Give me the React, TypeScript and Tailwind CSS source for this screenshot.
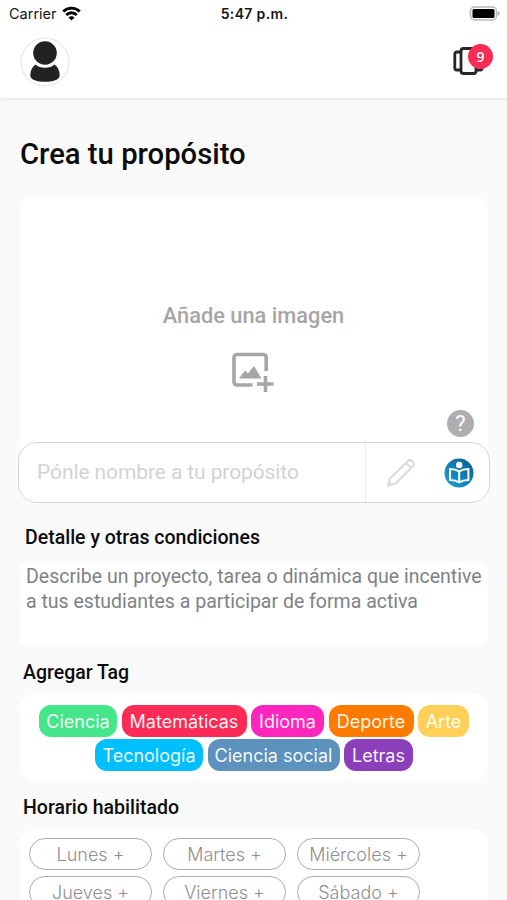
import { clsx } from "clsx";

const TAG_ROWS = [
  [
    { label: "Ciencia", width: "w-[78px]", color: "bg-[#45e68a]" },
    { label: "Matemáticas", width: "w-[125px]", color: "bg-[#fc2b55]" },
    { label: "Idioma", width: "w-[73px]", color: "bg-[#ff26bd]" },
    { label: "Deporte", width: "w-[85px]", color: "bg-[#ff7b00]" },
    { label: "Arte", width: "w-[51px]", color: "bg-[#ffd057]" },
  ],
  [
    { label: "Tecnología", width: "w-[108px]", color: "bg-[#00bfff]" },
    { label: "Ciencia social", width: "w-[132px]", color: "bg-[#5c92bc]" },
    { label: "Letras", width: "w-[69px]", color: "bg-[#8b3fba]" },
  ],
];

const DAYS = ["Lunes", "Martes", "Miércoles", "Jueves", "Viernes", "Sábado"];

function StatusBar() {
  return (
    <div className="grid h-7 grid-cols-3 items-center pl-[9px] pr-[7px] font-['Inter',sans-serif] text-[#161616]">
      <div className="flex items-center gap-[5px]">
        <span className="text-[14.5px]">Carrier</span>
        <svg className="-mt-0.5" width="19" height="15" viewBox="0 0 19 15" fill="none" stroke="#000" strokeWidth="2.8">
          <path d="M1.2 5.5a11.8 11.8 0 0 1 16.6 0" />
          <path d="M4.3 8.9a7.4 7.4 0 0 1 10.4 0" />
          <path d="M9.5 14.5l-3-3a4.2 4.2 0 0 1 6 0z" fill="#000" stroke="none" />
        </svg>
      </div>
      <span className="-mt-0.5 whitespace-nowrap text-center text-[14px] font-semibold tracking-[0.35px]">
        5:47 p.m.
      </span>
      <svg className="-mt-0.5 justify-self-end" width="31" height="15" viewBox="0 0 31 15">
        <rect x="1.5" y="1" width="26" height="13" rx="4" fill="#fff" stroke="#b8b8b8" strokeWidth="1.5" />
        <rect x="3.5" y="3" width="22" height="9" rx="1.5" fill="#000" />
        <path d="M28.8 5.2v4.6c2.4-.8 2.4-3.8 0-4.6z" fill="#a8a8a8" />
      </svg>
    </div>
  );
}

function Header() {
  return (
    <header className="flex h-[70px] items-start justify-between pl-5 pr-[13px] pt-[9px]">
      <svg width="50" height="50" viewBox="0 0 50 50">
        <circle cx="25" cy="25" r="24" fill="#fff" stroke="#e2e2e2" />
        <circle cx="25" cy="16" r="11.8" fill="#222" />
        <path
          d="M15.5 27.4c2.3 2.2 5.7 3.3 9.5 3.3s7.2-1.1 9.5-3.3c3.3 2.2 5.2 6.1 5.2 11.1 0 4.4-7.2 6.3-14.7 6.3s-14.7-1.9-14.7-6.3c0-5 1.9-8.900 5.200-11.100z"
          fill="#222"
        />
      </svg>
      <div className="relative h-10 w-[44px]">
        <svg className="mt-2" width="36" height="32" viewBox="0 0 36 32" fill="none" stroke="#262626" strokeWidth="2.8">
          <rect x="11" y="3.5" width="15" height="25" rx="2.5" />
          <path d="M10.5 7H6.8a2 2 0 0 0-2 2v14a2 2 0 0 0 2 2h3.7" />
          <path d="M26.5 7h3.7a2 2 0 0 1 2 2v14a2 2 0 0 1-2 2h-3.7" />
        </svg>
        <span className="absolute right-px top-[7px] flex size-[25px] items-center justify-center rounded-full bg-[#fc2b55] pb-px font-['Open_Sans',sans-serif] text-[14px] font-semibold text-white">
          9
        </span>
      </div>
    </header>
  );
}

function AddImageIcon() {
  return (
    <svg width="42" height="40" viewBox="0 0 42 40" fill="none" stroke="#a6a6a6" strokeWidth="3.6">
      <path d="M34.2 19V5.5a3 3 0 0 0-3-3H5a3 3 0 0 0-3 3V30a3 3 0 0 0 3 3h15.5" />
      <path d="M33.5 24v16M25 32h16.5" />
      <path d="M7 26.5l6-8 3 3 6-7.5 7.5 12.5z" fill="#a6a6a6" stroke="none" />
    </svg>
  );
}

function PencilIcon() {
  return (
    <svg width="30" height="30" viewBox="0 0 30 30" fill="none" stroke="#dcdcdc" strokeWidth="2.2" strokeLinejoin="round">
      <path d="M2 27.5l2-7L22 3c1.3-1.2 3-1.2 4.2 0l1 1c1.2 1.2 1.2 2.9 0 4.1L9.5 25.5z" />
      <path d="M20 5l5.2 5.2M2 27.5l3.5-1-2.5-2.5z" />
    </svg>
  );
}

function ReaderIcon() {
  return (
    <svg width="30" height="30" viewBox="0 0 30 30">
      <defs>
        <linearGradient id="reader" x1="0" y1="1" x2="1" y2="0">
          <stop offset="0" stopColor="#1aa3dc" />
          <stop offset="1" stopColor="#075b91" />
        </linearGradient>
      </defs>
      <circle cx="15" cy="15" r="14.5" fill="url(#reader)" />
      <circle cx="15.2" cy="7" r="3.2" fill="#fff" />
      <path
        d="M15.2 13.4c-2.7-1.8-5.6-2.5-9.2-2.5v11c3.6 0 6.5.6 9.2 2.4 2.7-1.8 5.6-2.4 9.2-2.4v-11c-3.6 0-6.5.7-9.2 2.5zM15.2 13.4v10.5"
        fill="none"
        stroke="#fff"
        strokeWidth="2"
      />
    </svg>
  );
}

function ImageCard() {
  return (
    <section className="mt-[22px] flex h-[305px] flex-col rounded-xl bg-white">
      <div className="flex flex-col items-center pt-[103px]">
        <p className="ml-[-1px] whitespace-nowrap text-[21.8px] font-medium leading-8 text-[#a6a6a6]">
          Añade una imagen
        </p>
        <div className="ml-[-3px] mt-[20px]">
          <AddImageIcon />
        </div>
      </div>
      <span className="mr-[14px] mt-[18px] flex size-[27px] items-center justify-center self-end rounded-full bg-[#aeaeae] text-[22px] text-white">
        ?
      </span>
      <div className="-mx-0.5 mt-[5px] flex h-[61px] shrink-0 items-center rounded-[19px] border-[1.5px] border-[#d6d6d6] bg-white">
        <span className="w-[346px] whitespace-nowrap pl-[18px] text-[21px] text-[#d3d3d3]">
          <span className="tracking-[-0.1px]">Pónle nombre a tu propósito</span>
        </span>
        <div className="flex h-full flex-1 items-center justify-between border-l border-[#ededed] pl-5 pr-[15px]">
          <PencilIcon />
          <ReaderIcon />
        </div>
      </div>
    </section>
  );
}

export default function App() {
  return (
    <div className="h-[900px] w-[507px] overflow-hidden bg-[#fafafa] font-['Roboto',sans-serif] text-[#0c0c0c]">
      <div className="bg-white shadow-[0_1px_4px_rgba(0,0,0,0.11)]">
        <StatusBar />
        <Header />
      </div>
      <main className="pl-5 pr-[19px]">
        <h1 className="mt-9 whitespace-nowrap text-[29.25px] font-medium leading-[41px]">
          Crea tu propósito
        </h1>
        <ImageCard />
        <h2 className="ml-[5px] mt-[22px] text-[19.5px] font-medium leading-7">
          Detalle y otras condiciones
        </h2>
        <p className="mt-[10px] h-[84px] whitespace-nowrap rounded-lg bg-white pl-1.5 pt-[3px] text-[19.5px] leading-[24.5px] text-[#7d8286]">
          Describe un proyecto, tarea o dinámica que incentive
          <br />a tus estudiantes a participar de forma activa
        </p>
        <h2 className="ml-[3px] mt-[13px] text-[19.5px] font-medium leading-7">Agregar Tag</h2>
        <section className="mt-1.5 flex h-[88px] flex-col gap-[2px] rounded-2xl bg-white pt-[12px] font-['Inter',sans-serif] text-[18px] text-white/95">
          {TAG_ROWS.map((row, i) => (
            <div key={i} className="flex justify-center gap-[4.5px]">
              {row.map((tag) => (
                <span
                  key={tag.label}
                  className={clsx(
                    "flex h-8 items-center justify-center whitespace-nowrap rounded-xl",
                    tag.width,
                    tag.color,
                  )}
                >
                  {tag.label}
                </span>
              ))}
            </div>
          ))}
        </section>
        <h2 className="ml-[3px] mt-[13px] text-[19.5px] font-medium leading-7">Horario habilitado</h2>
        <section className="mt-[7px] grid h-[130px] grid-cols-[repeat(3,123px)] content-start gap-x-[11px] gap-y-[6px] rounded-2xl bg-white pl-[9px] pt-[9px] font-['Inter',sans-serif] text-[18px] font-light text-[#8f8f8f]">
          {DAYS.map((day) => (
            <span
              key={day}
              className="flex h-8 items-center justify-center whitespace-nowrap rounded-full border-[1.5px] border-[#adadad]"
            >
              {day} +
            </span>
          ))}
        </section>
      </main>
    </div>
  );
}
